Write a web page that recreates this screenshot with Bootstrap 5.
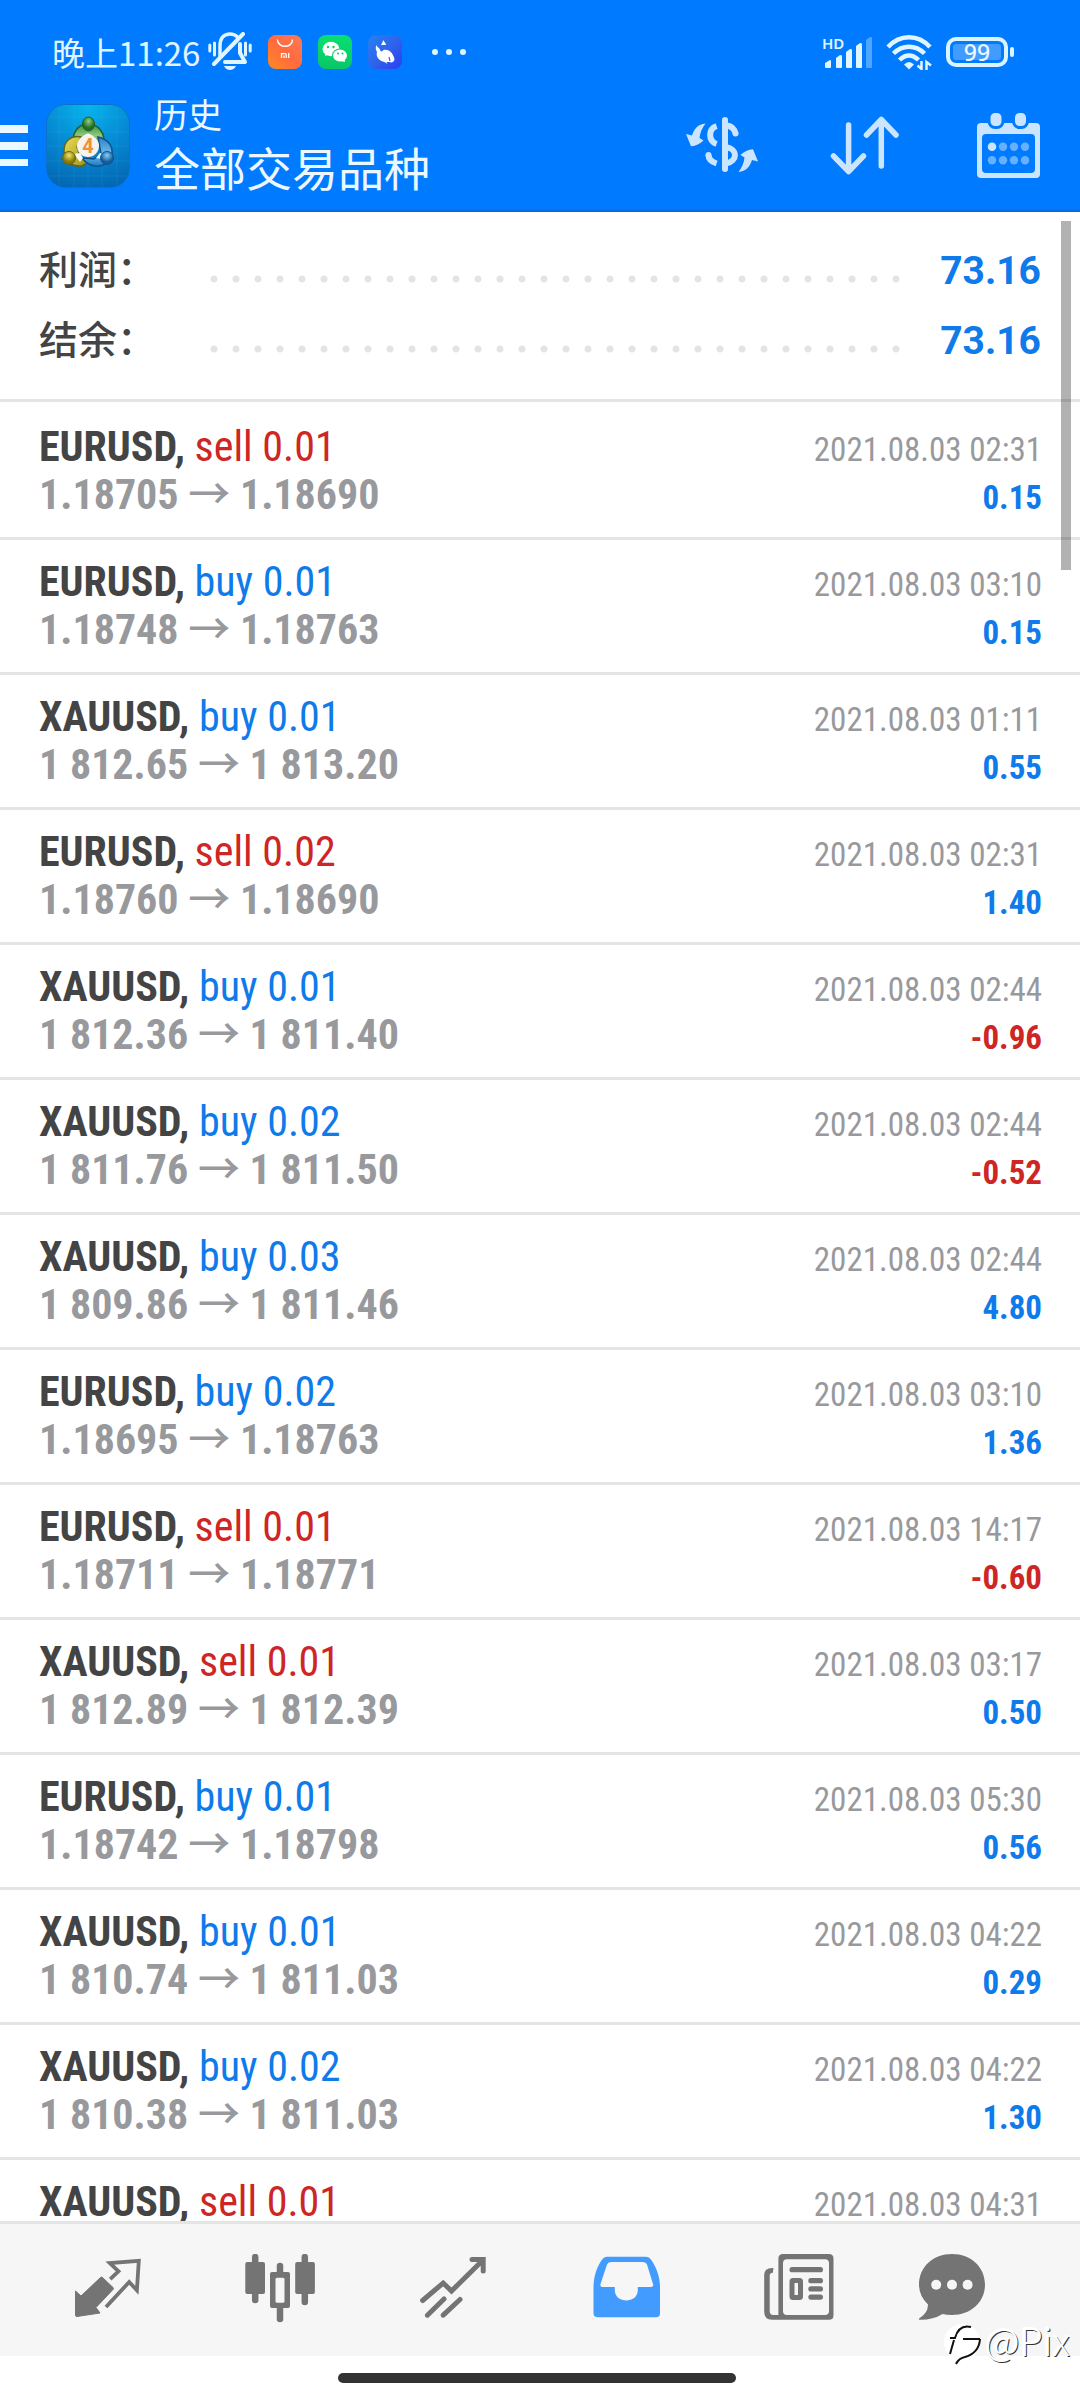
<!DOCTYPE html>
<html lang="zh-CN">
<head>
<meta charset="utf-8">
<meta name="viewport" content="width=device-width, initial-scale=1">
<title>历史</title>
<link rel="stylesheet" href="https://cdn.jsdelivr.net/npm/bootstrap@5.3.0/dist/css/bootstrap.min.css">
<style>
  body { font-family: "Roboto Condensed", Roboto, "Noto Sans CJK SC", sans-serif; color: #444; background: #fff; }
  svg { display: block; flex: none; }
  .top-area { background: #007bff; border-bottom: 2px solid #0b6bdc; color: #ebf8ff; }
  .status-line { padding: 30px 66px 0 52px; height: 74px; font-family: "Noto Sans CJK SC", sans-serif; }
  .clock { font-size: 33px; line-height: 42px; color: #e0f5ff; }
  .tray { gap: 16px; }
  .signals { gap: 14px; }
  .app-bar { padding: 15px 36px 7px 0; font-family: "Noto Sans CJK SC", sans-serif; }
  .app-bar button, .tabs button { background: none; border: 0; padding: 0; }
  .app-logo { margin: 0 24px 0 18px; }
  .heading-block { padding-bottom: 10px; }
  .head-sub { font-size: 34px; line-height: 50px; }
  .head-main { font-size: 46px; line-height: 54px; }
  .actions { gap: 71px; color: #cce5ff; }
  .totals { padding: 24px 39px 23px; border-bottom: 3px solid #e4e4e4; }
  .total-name { font: 500 39px/60px "Noto Sans CJK SC", sans-serif; }
  .total-value { font: 700 39px/70px Roboto, sans-serif; color: #0f7aea; }
  .leader { height: 8px; margin: 16px 33px 0 47px; background: radial-gradient(circle at 11px 4px, #e4e4e4 3px, transparent 4px) 0 0 / 22px 8px repeat-x; }
  .trades { padding-top: 3px; }
  .trade { padding: 18px 38px 18px 39px; border-bottom: 3px solid #e4e4e4; line-height: 48px; }
  .deal { font-size: 42px; font-weight: 400; }
  .deal b { font-weight: 700; color: #444; }
  .prices { font-size: 42px; font-weight: 700; color: #98999d; }
  .prices i { font: 500 42px/20px "Noto Sans CJK SC", sans-serif; }
  .stamp { font-size: 33px; line-height: 38px; color: #98999d; }
  .gain { font-size: 33px; line-height: 38px; font-weight: 700; }
  .c-buy { color: #0f7aea; }
  .c-sell { color: #ce2525; }
  .scroll-thumb { position: absolute; top: 9px; right: 9px; width: 10px; height: 349px; background: rgba(0,0,0,.3); }
  .tabs { background: #f6f6f6; border-top: 3px solid #e4e4e4; padding: 30px 62px 30px 20px; color: #747474; }
  .tabs button { flex: 173 1 0; color: inherit; }
  .tabs button:last-child { flex-grow: 133; }
  .tabs button.current { color: #429bff; }
  .tabs svg { margin: 0 auto; }
  .gesture { height: 44px; padding: 17px 6px 0 0; }
  .gesture span { width: 37%; height: 10px; border-radius: 5px; background: #333; }
  .stamp-mark { position: absolute; right: 10px; bottom: 34px; gap: 3px; font: 300 38px/36px "Noto Sans CJK SC", sans-serif; color: #fff; text-shadow: 1px 1px 0 #333, -1px -1px 0 #fff; }
</style>
</head>
<body>
<div class="d-flex flex-column vh-100 overflow-hidden position-relative">
  <header class="top-area flex-shrink-0">
    <div class="status-line d-flex justify-content-between align-items-center">
      <div class="tray d-flex align-items-center">
        <div class="d-flex align-items-center gap-2">
          <span class="clock">晚上11:26</span>
          <svg width="44" height="40" viewBox="0 0 44 40" fill="none" stroke="#e0f5ff" stroke-width="3" stroke-linecap="round"><path d="M1.800 13v6M6.500 11v12M37.500 11v12M42.200 13v6"/><path d="M12 24V14C12 6 16 2 22 2c3 0 5.500 1 7.500 3" stroke-width="3.500"/><path d="M6 32L35 2" stroke-width="4"/><path d="M32 12v9l5 9H17" stroke-width="4" stroke-linejoin="round"/><path d="M16 34h12q-2 4-6 4t-6-4z" fill="#e0f5ff" stroke="none"/></svg>
        </div>
        <svg width="34" height="34" viewBox="0 0 34 34"><defs><linearGradient id="gm" x1="1" y1="0" x2="0" y2="1"><stop offset="0" stop-color="#ff7a52"/><stop offset=".5" stop-color="#ff6a40"/><stop offset="1" stop-color="#ff8a1e"/></linearGradient></defs><rect width="34" height="34" rx="8" fill="url(#gm)"/><path d="M9.500 4.500c0 9 15 9 15 0" fill="none" stroke="#fff" stroke-width="1.500"/><path d="M13.500 23v-4.300h3.500q1.300 0 1.300 1.300v3M16 23v-2.500M20.700 18v5" fill="none" stroke="#fff" stroke-width="1.300"/></svg>
        <svg width="34" height="34" viewBox="0 0 34 34"><defs><linearGradient id="gw" x2="0" y2="1"><stop stop-color="#08df72"/><stop offset="1" stop-color="#08c766"/></linearGradient></defs><rect width="34" height="34" rx="8" fill="url(#gw)"/><path d="M7 21l1 -5h6l-3 3.500z" fill="#fff"/><ellipse cx="13" cy="14" rx="8.500" ry="7.200" fill="#fff"/><ellipse cx="22" cy="20.500" rx="8" ry="7" fill="#08cf6a"/><path d="M27 27l-.5-4-4 3z" fill="#fff"/><ellipse cx="22" cy="20.500" rx="7" ry="6" fill="#fff"/><g fill="#08cf6a"><circle cx="10" cy="12" r="1.200"/><circle cx="15.500" cy="12" r="1.200"/><circle cx="20" cy="18.500" r="1"/><circle cx="24.500" cy="18.500" r="1"/></g></svg>
        <svg width="34" height="34" viewBox="0 0 34 34"><defs><linearGradient id="gf" x2="1" y2="1"><stop stop-color="#2482f5"/><stop offset=".5" stop-color="#2f64ea"/><stop offset="1" stop-color="#2c3df2"/></linearGradient></defs><rect width="34" height="34" rx="8" fill="url(#gf)"/><path d="M15 5c1 2 3 3 3 5l-5 0c1-2 2-3 2-5z" fill="#fff"/><path d="M8.500 10c1 3 3 2 4 6 1 1 2 0 3-1 5-1 9 2 11 9 0 3-3 4-5 3l-3 0 1 2-3-2c-5-1-9-5-7.500-10-1-2-2-4-.5-7z" fill="#fff"/><path d="M21 22l1 4" stroke="#3560ea" stroke-width="1.200"/></svg>
        <svg width="48" height="34" viewBox="0 0 48 34" fill="#e0f5ff"><circle cx="17" cy="17" r="3"/><circle cx="31" cy="17" r="3"/><circle cx="45" cy="17" r="3"/></svg>
      </div>
      <div class="signals d-flex align-items-center">
        <svg width="50" height="34" viewBox="0 0 50 34" fill="#e0f5ff"><text x="0" y="14" font-family="Noto Sans, sans-serif" font-size="15" font-weight="600">HD</text><path d="M3 28l5-3q1 0 1 1v6q0 1-1 1H4q-1 0-1-1z"/><path d="M14 23l4-3q2 0 2 1v11q0 1-1 1h-4q-1 0-1-1z"/><path d="M24 17l4-3q2 0 2 1v17q0 1-1 1h-4q-1 0-1-1z"/><path d="M34 11l4-3q2 0 2 1v23q0 1-1 1h-4q-1 0-1-1z"/><path d="M44 5l4-3q2 0 2 1v29q0 1-1 1h-4q-1 0-1-1z" opacity=".35"/></svg>
        <svg width="46" height="36" viewBox="0 0 46 36" fill="none" stroke="#e0f5ff" stroke-width="4.500"><path d="M2 13C14 0 32 0 44 13M7.500 19.500c9-9 22-9 31 0M13.500 26c6-6 13-6 19 0"/><path d="M18 30.500q5-5 10 0l-5 5z" fill="#e0f5ff" stroke="none"/><path d="M35.500 27v8l-4-3.500M40.500 36v-8l4.500 3.500" stroke-width="2.500"/></svg>
        <svg width="68" height="30" viewBox="0 0 68 30"><rect x="2" y="2" width="58" height="26" rx="8" fill="none" stroke="#dcf4ff" stroke-width="4"/><rect x="7" y="7" width="48" height="16" rx="3" fill="#429bff"/><rect x="64" y="10" width="4" height="10" rx="2" fill="#dcf4ff"/><text x="31" y="24" text-anchor="middle" font-family="Noto Sans, sans-serif" font-size="23" font-weight="500" fill="#ebf8ff">99</text></svg>
      </div>
    </div>
    <div class="app-bar d-flex align-items-center">
      <button type="button" aria-label="菜单"><svg width="28" height="42" viewBox="0 0 28 42" fill="#ebf8ff"><path d="M0 0h28v8H0zM0 17h28v8H0zM0 34h28v7H0z"/></svg></button>
      <svg class="app-logo" width="84" height="84" viewBox="0 0 84 84">
        <defs>
          <radialGradient id="bgl" cx=".5" cy="0" r="1.1"><stop stop-color="#06b6ee"/><stop offset=".5" stop-color="#0689d2"/><stop offset="1" stop-color="#0362ae"/></radialGradient>
          <linearGradient id="gg" x2="0" y2="1"><stop stop-color="#3b8e3c"/><stop offset=".5" stop-color="#8cc97c"/><stop offset="1" stop-color="#2c8038"/></linearGradient>
          <linearGradient id="gy" x2="1" y2="1"><stop stop-color="#e9e05a"/><stop offset="1" stop-color="#9c8f14"/></linearGradient>
          <linearGradient id="gb" x2="0" y2="1"><stop stop-color="#2d83c6"/><stop offset=".6" stop-color="#6dbdee"/><stop offset="1" stop-color="#1e78be"/></linearGradient>
          <radialGradient id="hg" cy=".3"><stop stop-color="#8fd07c"/><stop offset="1" stop-color="#206c24"/></radialGradient>
          <radialGradient id="hy" cy=".3"><stop stop-color="#f2e46a"/><stop offset="1" stop-color="#84780a"/></radialGradient>
          <radialGradient id="hb" cy=".3"><stop stop-color="#88cdf5"/><stop offset="1" stop-color="#125c9c"/></radialGradient>
        </defs>
        <rect x=".5" y=".5" width="83" height="83" rx="19" fill="url(#bgl)" stroke="#0a72ca"/>
        <path d="M13 3v78M28 1v82M42 1v82M56 1v82M71 3v78M3 13h78M1 28h82M1 42h82M1 57h82M3 72h78" stroke="#5ad0ff" stroke-opacity=".12" fill="none"/>
        <path d="M27 37C27 26 34 20 42 20s16 6 16 17v6H46L42 30 37 36z" fill="url(#gg)" stroke="#215f2b" stroke-width="1.500"/>
        <path d="M35 33C25 31 18 37 18 47c0 10 8 16 18 15l7-4-9-6-3-9z" fill="url(#gy)" stroke="#69640f" stroke-width="1.500"/>
        <path d="M52 33c10 2 15 9 14 17-1 8-9 13-17 12-6-1-10-4-13-8l12 1 7-5z" fill="url(#gb)" stroke="#0f528e" stroke-width="1.500"/>
        <path d="M28 50l6-1 3 5-3 4zM50 54l4-5 5 2-2 4zM37 32l5-3 5 3z" fill="#f4f8fa"/>
        <ellipse cx="42.500" cy="20" rx="6" ry="7" fill="url(#hg)" stroke="#215f2b"/>
        <circle cx="23" cy="54" r="6.500" fill="url(#hy)" stroke="#69640f"/>
        <circle cx="61" cy="54" r="6.500" fill="url(#hb)" stroke="#0f528e"/>
        <circle cx="42" cy="42" r="11" fill="#f5f2ef"/>
        <text x="42" y="49" text-anchor="middle" font-family="Roboto, sans-serif" font-size="20" font-weight="700" fill="#f09038">4</text>
      </svg>
      <div class="heading-block flex-grow-1">
        <div class="head-sub">历史</div>
        <div class="head-main">全部交易品种</div>
      </div>
      <div class="actions d-flex align-items-center">
        <button type="button" aria-label="货币" class="text-reset"><svg width="72" height="60" viewBox="0 -1 72 60"><g fill="none" stroke="currentColor" stroke-width="6"><path d="M39 3v49" stroke-linecap="round"/><path d="M30.600 9C22 12 22 24 30.600 27M30.600 46.500C26 45 22.500 42 22.500 38"/><path d="M40 8.500c5 0 9 4 9.500 8M40 30c12 2 12 14 0 16.500"/></g><circle cx="22.500" cy="38" r="3" fill="currentColor"/><circle cx="49.500" cy="16.500" r="3" fill="currentColor"/><path id="sw" d="M0 17l6 1.500C8 12 12 7 19.500 6.500 16 11 14 16 13.500 21l4 2.500C14 27 10 29 5 29.300z" fill="currentColor"/><use href="#sw" transform="rotate(180 36 30.750)"/></svg></button>
        <button type="button" aria-label="排序" class="text-reset"><svg width="72" height="60" viewBox="0 0 72 60" fill="none" stroke="currentColor" stroke-width="5.500" stroke-linecap="round" stroke-linejoin="round"><path d="M19.600 9v46M4.500 40l15.100 15.500L34.500 40M52.300 50V4M37.500 19L52.300 3.500 67 19"/></svg></button>
        <button type="button" aria-label="日历" class="text-reset"><svg width="72" height="68" viewBox="0 0 72 68"><path fill-rule="evenodd" d="M9 11h55q4 0 4 4v47q0 4-4 4H9q-4 0-4-4V15q0-4 4-4zm5 11q-4 0-4 4v31q0 4 4 4h45q4 0 4-4V26q0-4-4-4z" fill="currentColor"/><g fill="currentColor" stroke="#007bff" stroke-width="3"><rect x="17" y="-.5" width="14" height="16" rx="6"/><rect x="41.500" y="-.5" width="14" height="16" rx="6"/></g><circle cx="20" cy="34.700" r="4.300" fill="currentColor"/><g fill="#66b0ff"><circle cx="31" cy="34.700" r="4.200"/><circle cx="42" cy="34.700" r="4.200"/><circle cx="53" cy="34.700" r="4.200"/><circle cx="20" cy="48.300" r="4.200"/><circle cx="31" cy="48.300" r="4.200"/><circle cx="42" cy="48.300" r="4.200"/><circle cx="53" cy="48.300" r="4.200"/></g></svg></button>
      </div>
    </div>
  </header>

  <main class="position-relative overflow-hidden" style="flex:1 1 0">
    <section class="totals">
      <div class="d-flex align-items-baseline"><span class="total-name">利润：</span><span class="leader flex-grow-1 align-self-center"></span><span class="total-value">73.16</span></div>
      <div class="d-flex align-items-baseline"><span class="total-name">结余：</span><span class="leader flex-grow-1 align-self-center"></span><span class="total-value">73.16</span></div>
    </section>
    <ul class="trades list-unstyled mb-0">
      <li class="trade">
        <div class="d-flex justify-content-between align-items-baseline"><span class="deal c-sell"><b>EURUSD,</b> sell 0.01</span><span class="stamp">2021.08.03 02:31</span></div>
        <div class="d-flex justify-content-between align-items-baseline"><span class="prices">1.18705 <i>→</i> 1.18690</span><span class="gain c-buy">0.15</span></div>
      </li>
      <li class="trade">
        <div class="d-flex justify-content-between align-items-baseline"><span class="deal c-buy"><b>EURUSD,</b> buy 0.01</span><span class="stamp">2021.08.03 03:10</span></div>
        <div class="d-flex justify-content-between align-items-baseline"><span class="prices">1.18748 <i>→</i> 1.18763</span><span class="gain c-buy">0.15</span></div>
      </li>
      <li class="trade">
        <div class="d-flex justify-content-between align-items-baseline"><span class="deal c-buy"><b>XAUUSD,</b> buy 0.01</span><span class="stamp">2021.08.03 01:11</span></div>
        <div class="d-flex justify-content-between align-items-baseline"><span class="prices">1 812.65 <i>→</i> 1 813.20</span><span class="gain c-buy">0.55</span></div>
      </li>
      <li class="trade">
        <div class="d-flex justify-content-between align-items-baseline"><span class="deal c-sell"><b>EURUSD,</b> sell 0.02</span><span class="stamp">2021.08.03 02:31</span></div>
        <div class="d-flex justify-content-between align-items-baseline"><span class="prices">1.18760 <i>→</i> 1.18690</span><span class="gain c-buy">1.40</span></div>
      </li>
      <li class="trade">
        <div class="d-flex justify-content-between align-items-baseline"><span class="deal c-buy"><b>XAUUSD,</b> buy 0.01</span><span class="stamp">2021.08.03 02:44</span></div>
        <div class="d-flex justify-content-between align-items-baseline"><span class="prices">1 812.36 <i>→</i> 1 811.40</span><span class="gain c-sell">-0.96</span></div>
      </li>
      <li class="trade">
        <div class="d-flex justify-content-between align-items-baseline"><span class="deal c-buy"><b>XAUUSD,</b> buy 0.02</span><span class="stamp">2021.08.03 02:44</span></div>
        <div class="d-flex justify-content-between align-items-baseline"><span class="prices">1 811.76 <i>→</i> 1 811.50</span><span class="gain c-sell">-0.52</span></div>
      </li>
      <li class="trade">
        <div class="d-flex justify-content-between align-items-baseline"><span class="deal c-buy"><b>XAUUSD,</b> buy 0.03</span><span class="stamp">2021.08.03 02:44</span></div>
        <div class="d-flex justify-content-between align-items-baseline"><span class="prices">1 809.86 <i>→</i> 1 811.46</span><span class="gain c-buy">4.80</span></div>
      </li>
      <li class="trade">
        <div class="d-flex justify-content-between align-items-baseline"><span class="deal c-buy"><b>EURUSD,</b> buy 0.02</span><span class="stamp">2021.08.03 03:10</span></div>
        <div class="d-flex justify-content-between align-items-baseline"><span class="prices">1.18695 <i>→</i> 1.18763</span><span class="gain c-buy">1.36</span></div>
      </li>
      <li class="trade">
        <div class="d-flex justify-content-between align-items-baseline"><span class="deal c-sell"><b>EURUSD,</b> sell 0.01</span><span class="stamp">2021.08.03 14:17</span></div>
        <div class="d-flex justify-content-between align-items-baseline"><span class="prices">1.18711 <i>→</i> 1.18771</span><span class="gain c-sell">-0.60</span></div>
      </li>
      <li class="trade">
        <div class="d-flex justify-content-between align-items-baseline"><span class="deal c-sell"><b>XAUUSD,</b> sell 0.01</span><span class="stamp">2021.08.03 03:17</span></div>
        <div class="d-flex justify-content-between align-items-baseline"><span class="prices">1 812.89 <i>→</i> 1 812.39</span><span class="gain c-buy">0.50</span></div>
      </li>
      <li class="trade">
        <div class="d-flex justify-content-between align-items-baseline"><span class="deal c-buy"><b>EURUSD,</b> buy 0.01</span><span class="stamp">2021.08.03 05:30</span></div>
        <div class="d-flex justify-content-between align-items-baseline"><span class="prices">1.18742 <i>→</i> 1.18798</span><span class="gain c-buy">0.56</span></div>
      </li>
      <li class="trade">
        <div class="d-flex justify-content-between align-items-baseline"><span class="deal c-buy"><b>XAUUSD,</b> buy 0.01</span><span class="stamp">2021.08.03 04:22</span></div>
        <div class="d-flex justify-content-between align-items-baseline"><span class="prices">1 810.74 <i>→</i> 1 811.03</span><span class="gain c-buy">0.29</span></div>
      </li>
      <li class="trade">
        <div class="d-flex justify-content-between align-items-baseline"><span class="deal c-buy"><b>XAUUSD,</b> buy 0.02</span><span class="stamp">2021.08.03 04:22</span></div>
        <div class="d-flex justify-content-between align-items-baseline"><span class="prices">1 810.38 <i>→</i> 1 811.03</span><span class="gain c-buy">1.30</span></div>
      </li>
      <li class="trade">
        <div class="d-flex justify-content-between align-items-baseline"><span class="deal c-sell"><b>XAUUSD,</b> sell 0.01</span><span class="stamp">2021.08.03 04:31</span></div>
      </li>
    </ul>
    <div class="scroll-thumb"></div>
  </main>

  <nav class="tabs d-flex flex-shrink-0">
    <button type="button" aria-label="行情"><svg width="72" height="72" viewBox="0 0 72 72"><path d="M4.500 37L10 42 29.500 23.500q1-1 2 0L42 33.500q1 1 0 2L25 53.500l4 5.500-23 3.500q-1.500 0-1.500-1.500z" fill="currentColor" stroke="currentColor" stroke-width="1"/><path d="M39.200 25.200l8.300-7.900-8.700-8.300 29-2.200-1.900 29.500-7.700-8.300L35 53" fill="none" stroke="currentColor" stroke-width="3.800"/></svg></button>
    <button type="button" aria-label="图表"><svg width="72" height="72" viewBox="0 0 72 72"><path d="M11.200 3v43M60.800 3v45M36 12v8M36 54v11" stroke="currentColor" stroke-width="6.500" stroke-linecap="round"/><g fill="currentColor"><rect x="1.300" y="8" width="19.700" height="32" rx="2"/><rect x="51.200" y="8" width="19.700" height="32" rx="2"/><path fill-rule="evenodd" d="M28 18h16q2 0 2 2v32q0 2-2 2H28q-2 0-2-2V20q0-2 2-2zm5 5.700q-1.500 0-1.500 1.500v22q0 1.500 1.500 1.500h6q1.500 0 1.500-1.500v-22q0-1.500-1.500-1.500z"/></g></svg></button>
    <button type="button" aria-label="交易"><svg width="72" height="72" viewBox="0 0 72 72" fill="none" stroke="currentColor" stroke-width="5" stroke-linecap="round" stroke-linejoin="miter"><path d="M5.600 46.500L26.200 29l8.300 8L65 7M55 5.500h11.200V17M10.400 61.200L27 45M26.200 61.200L43 45.500"/></svg></button>
    <button type="button" aria-label="历史" class="current"><svg width="72" height="72" viewBox="0 0 72 72"><path fill-rule="evenodd" fill="currentColor" d="M3.500 32C3.500 22 8 10 13 4.500Q14.500 2.700 17 2.700h39q2.500 0 4 1.800C65 10 70 22 70 32v27q0 4.300-4 4.300H8q-4.500 0-4.500-4.300zM21 8q-3 0-4 2.500L10.500 30q-1 3 2 3h12.300v3c0 14 23 14 23 0v-3H61q3 0 2-3L57 10.500Q56 8 53 8z"/></svg></button>
    <button type="button" aria-label="新闻"><svg width="72" height="72" viewBox="0 0 72 72"><path fill-rule="evenodd" fill="currentColor" d="M20 0h46q4.500 0 4.500 4.500v56.700q0 4.500-4.500 4.500H9q-7.800 0-7.800-8V21q0-7 8-7h1.300l-.7 4.800q-3.100 0-3.100 3V57q0 4 3.500 4h5.200V4.500Q15.400 0 20 0zm4 5.300q-4 0-4 4V57q0 4 4 4h38q4 0 4-4V9.300q0-4-4-4z"/><g fill="currentColor"><rect x="26.500" y="13" width="33.500" height="5.300" rx="2.600"/><rect x="45.300" y="24" width="14.700" height="5.300" rx="2.600"/><rect x="45.300" y="32.200" width="14.700" height="5.300" rx="2.600"/><rect x="45.300" y="40.400" width="14.700" height="5.300" rx="2.600"/></g><rect x="29" y="26.400" width="8.500" height="17" rx="1" fill="none" stroke="currentColor" stroke-width="5"/></svg></button>
    <button type="button" aria-label="消息"><svg width="72" height="72" viewBox="0 0 72 72"><path fill="currentColor" d="M36 0c19 0 33 13 33 30.500S55 61 36 61q-5 0-9.500-1Q17 66 4 65.800q-2 0-.5-1.600Q12 59 12 50.500 3 42 3 30.500C3 13 17 0 36 0z"/><g fill="#f6f6f6"><circle cx="20.200" cy="30.700" r="5"/><circle cx="36" cy="30.700" r="5"/><circle cx="51.600" cy="30.700" r="5"/></g></svg></button>
  </nav>
  <div class="gesture d-flex justify-content-center flex-shrink-0"><span></span></div>

  <div class="stamp-mark d-flex align-items-start">
    <svg width="38" height="44" viewBox="0 0 38 44"><circle cx="18" cy="20" r="18" fill="#fff"/><path d="M12 42q3-6 9-7 14-4 15-18M6 16h5Q15 2 27 5M19 17h17M10 18L6 32" fill="none" stroke="#111" stroke-width="2"/></svg>
    <span>@Pix</span>
  </div>
</div>
<script src="https://cdn.jsdelivr.net/npm/bootstrap@5.3.0/dist/js/bootstrap.bundle.min.js"></script>
</body>
</html>
